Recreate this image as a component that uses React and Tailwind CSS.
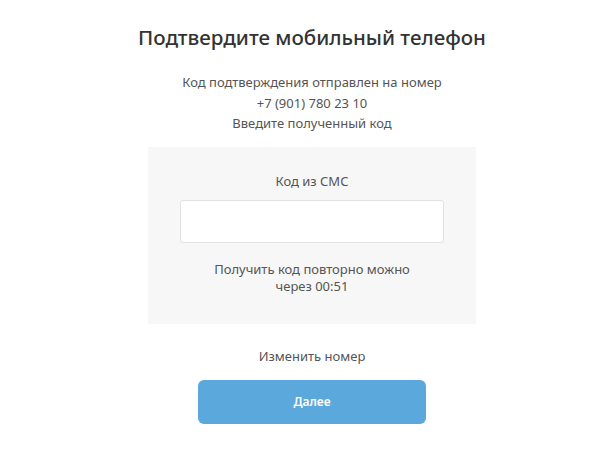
export default function App() {
  return (
    <div
      className="min-h-screen bg-white pl-[15px] flex flex-col items-center text-[#555]"
      style={{ fontFamily: '"Noto Sans", "Open Sans", sans-serif' }}
    >
      <h1 className="mt-[23px] text-[20.5px] leading-[28px] font-medium text-[#333]">
        Подтвердите мобильный телефон
      </h1>
      <div className="mt-[21px] text-[13px] leading-[20.5px] text-center">
        <p>Код подтверждения отправлен на номер</p>
        <p>+7 (901) 780 23 10</p>
        <p>Введите полученный код</p>
      </div>
      <div className="mt-[13px] w-[328px] bg-[#f7f7f7] px-[32px] pt-[24px] pb-[29px] flex flex-col items-center">
        <label className="text-[13px] leading-[20px]">Код из СМС</label>
        <input
          type="text"
          className="mt-[9px] w-full h-[43px] bg-white border border-[#e2e2e2] rounded-[3px] outline-none px-3 text-[14px]"
        />
        <p className="mt-[18px] text-[13px] leading-[17px] text-center">
          Получить код повторно можно
          <br />
          через 00:51
        </p>
      </div>
      <a href="#" className="mt-[22px] text-[13px] leading-[20px] text-[#555]">
        Изменить номер
      </a>
      <button className="mt-[14px] w-[228px] h-[44px] rounded-[6px] bg-[#5ba9dc] text-white text-[12px] font-semibold">
        Далее
      </button>
    </div>
  );
}
